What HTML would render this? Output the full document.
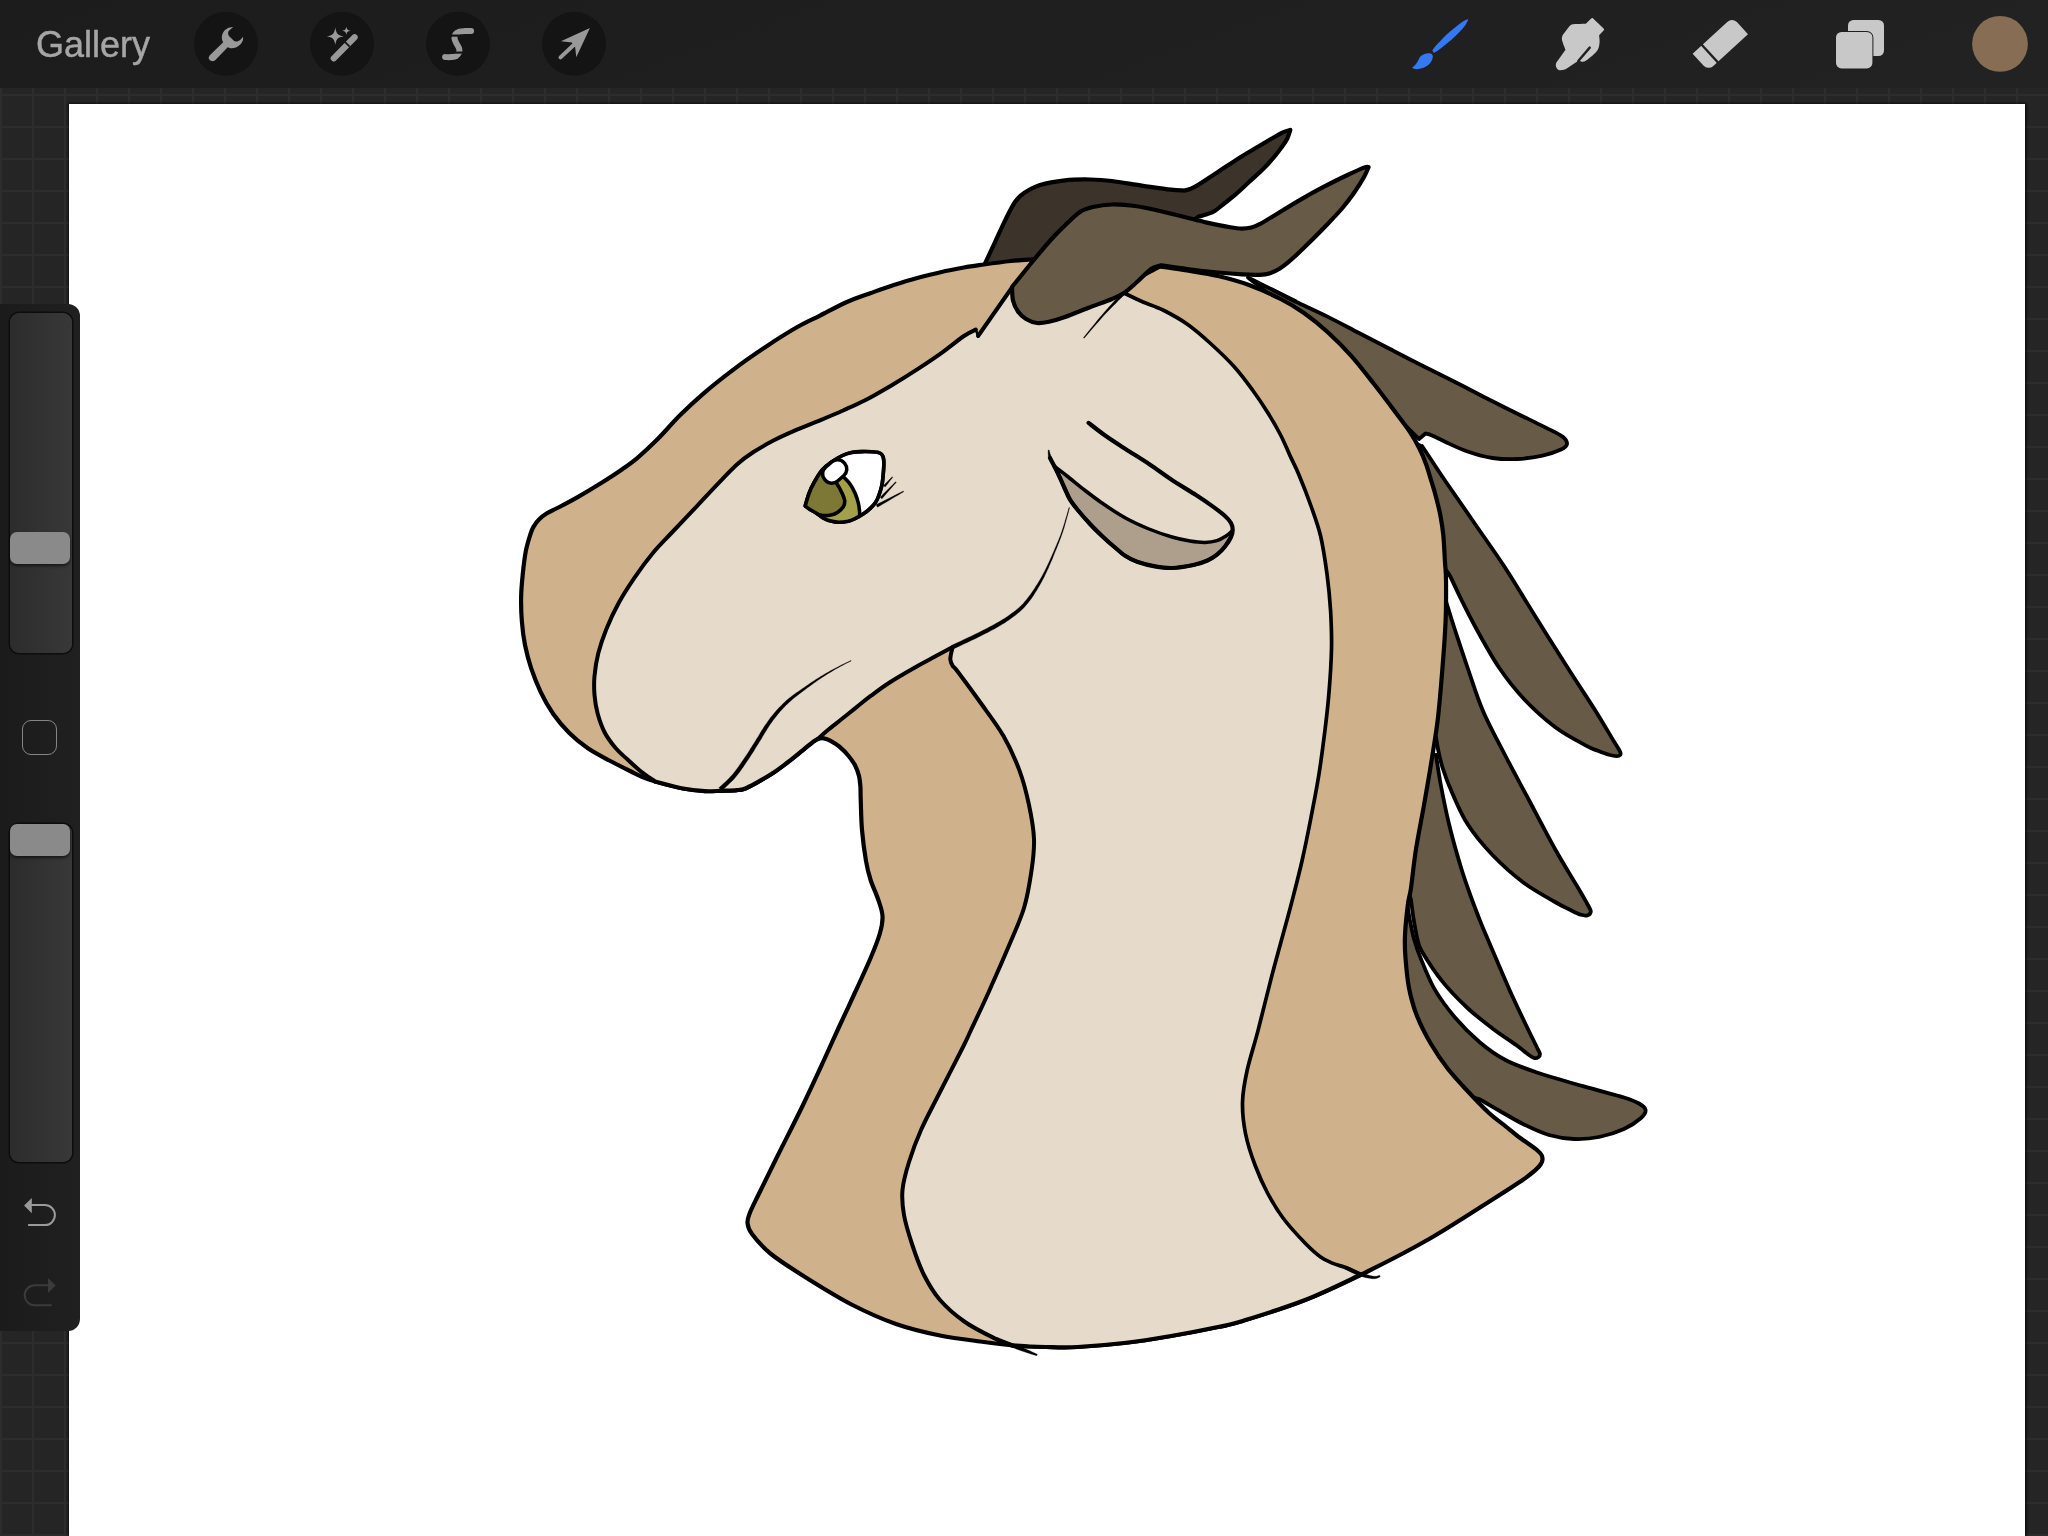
<!DOCTYPE html>
<html lang="en">
<head>
<meta charset="utf-8">
<title>Procreate canvas</title>
<style>
html,body{margin:0;padding:0;width:2048px;height:1536px;overflow:hidden;background:#252525;}
body{position:relative;font-family:"Liberation Sans",sans-serif;}
#bg{position:absolute;left:0;top:0;width:2048px;height:1536px;background-color:#252525;
 background-image:linear-gradient(to right,#2d2d2d 0,#2d2d2d 2px,transparent 2px),linear-gradient(to bottom,#2d2d2d 0,#2d2d2d 2px,transparent 2px);
 background-size:32px 32px,32px 32px;background-position:0px 0px,0px 30px;}
#canvas{position:absolute;left:69px;top:104px;width:1956px;height:1432px;background:#fff;box-shadow:0 0 3px 1.5px rgba(0,0,0,0.8);}
#topbar{position:absolute;left:0;top:0;width:2048px;height:88px;background:linear-gradient(160deg,#1c1c1c 0%,#1f1f1f 50%,#222222 100%);}
#gallery{position:absolute;left:36px;top:24.4px;font-size:36px;line-height:42px;color:#a6a6a6;letter-spacing:0px;-webkit-text-stroke:0.45px #a6a6a6;will-change:transform;}
#side{position:absolute;left:0;top:304px;width:80px;height:1027px;background:linear-gradient(to right,#1b1b1b,#202020);border-radius:0 12px 12px 0;}
.track{position:absolute;left:9.5px;width:62px;background:linear-gradient(to right,#2c2c2c,#383838);border-radius:9px;box-shadow:0 0 0 1.5px #0d0d0d;}
.thumb{position:absolute;left:10px;width:60px;height:32px;background:#8a8a8a;border-radius:7px;box-shadow:0 2px 3px rgba(0,0,0,0.55);}
#sq{position:absolute;left:22px;top:720px;width:33px;height:33px;border:1.6px solid #858585;border-radius:9px;}
#art{position:absolute;left:0;top:0;}
#ui{position:absolute;left:0;top:0;}
</style>
</head>
<body>
<div id="bg"></div>
<div id="canvas"></div>
<svg id="art" width="2048" height="1536" viewBox="0 0 2048 1536">
<path d="M1407.0 903.0C1407.5 905.7 1408.5 913.0 1409.7 919.0C1410.9 925.0 1412.2 932.5 1414.0 939.0C1415.8 945.5 1417.1 949.6 1420.6 958.0C1424.0 966.4 1429.0 979.5 1434.7 989.4C1440.4 999.3 1447.5 1008.6 1455.0 1017.5C1462.5 1026.3 1471.7 1035.5 1480.0 1042.5C1488.3 1049.5 1495.6 1054.8 1505.0 1059.7C1514.4 1064.7 1523.2 1067.8 1536.2 1072.2C1549.2 1076.6 1568.4 1082.0 1583.0 1086.2C1597.6 1090.5 1614.7 1094.6 1624.0 1097.5C1633.3 1100.4 1635.4 1101.4 1639.0 1103.5C1642.6 1105.6 1645.3 1107.6 1645.6 1110.0C1645.9 1112.4 1644.6 1114.8 1641.0 1118.0C1637.4 1121.2 1631.0 1125.8 1624.0 1129.0C1617.0 1132.2 1607.3 1135.3 1599.0 1137.0C1590.7 1138.7 1582.3 1139.3 1574.0 1139.0C1565.7 1138.7 1557.3 1137.4 1549.0 1135.0C1540.7 1132.6 1532.3 1128.6 1524.0 1124.5C1515.7 1120.4 1506.3 1114.7 1499.0 1110.5C1491.7 1106.3 1483.2 1101.3 1480.0 1099.5C1473.3 1096.2 1454.2 1096.6 1440.0 1080.0C1425.8 1063.4 1400.5 1029.5 1395.0 1000.0C1389.5 970.5 1405.0 919.2 1407.0 903.0Z" fill="#675a47" stroke="#000" stroke-width="3.8" stroke-linejoin="round" stroke-linecap="round" />
<path d="M1436.0 755.0C1436.8 760.2 1438.8 774.5 1441.0 786.0C1443.2 797.5 1445.7 810.4 1449.0 824.0C1452.3 837.6 1457.3 855.3 1461.0 867.5C1464.7 879.7 1467.8 888.1 1471.0 897.0C1474.2 905.9 1477.1 913.3 1480.0 920.6C1482.9 927.9 1485.6 934.1 1488.5 941.0C1491.4 947.9 1493.5 952.8 1497.5 962.0C1501.5 971.2 1507.3 985.2 1512.5 996.5C1517.7 1007.8 1524.2 1021.3 1528.4 1030.0C1532.6 1038.7 1535.6 1044.6 1537.5 1048.5C1539.4 1052.4 1539.7 1052.2 1539.9 1053.6C1540.1 1055.0 1539.5 1056.3 1538.6 1057.0C1537.6 1057.7 1536.1 1058.6 1534.2 1058.0C1532.3 1057.4 1529.8 1055.5 1527.0 1053.5C1524.2 1051.5 1523.2 1050.2 1517.5 1046.0C1511.8 1041.8 1500.8 1034.7 1492.5 1028.4C1484.2 1022.1 1475.8 1015.8 1467.5 1008.0C1459.2 1000.2 1450.0 991.0 1442.5 981.6C1435.0 972.2 1426.4 958.9 1422.2 951.9C1418.0 944.9 1418.9 944.9 1417.5 939.4C1416.1 933.9 1414.7 925.6 1413.6 919.0C1412.5 912.4 1411.4 903.2 1411.0 900.0C1409.2 891.7 1398.5 873.3 1400.0 850.0C1401.5 826.7 1414.0 775.8 1420.0 760.0C1426.0 744.2 1433.3 755.8 1436.0 755.0Z" fill="#675a47" stroke="#000" stroke-width="3.8" stroke-linejoin="round" stroke-linecap="round" />
<path d="M1445.6 600.0C1447.2 605.0 1451.3 618.8 1455.0 630.0C1458.7 641.2 1462.8 654.0 1467.5 667.5C1472.2 681.0 1476.8 696.4 1483.0 711.0C1489.2 725.6 1497.2 739.8 1505.0 755.0C1512.8 770.2 1521.7 786.3 1530.0 802.0C1538.3 817.7 1547.2 835.0 1555.0 849.0C1562.8 863.0 1571.2 876.2 1577.0 886.0C1582.8 895.8 1587.2 903.6 1589.5 908.0C1591.8 912.4 1590.8 911.3 1590.5 912.5C1590.2 913.7 1589.1 914.9 1587.5 915.3C1585.9 915.7 1583.9 915.7 1581.0 914.8C1578.1 913.9 1574.3 911.9 1570.0 909.8C1565.7 907.7 1562.7 906.5 1555.0 902.0C1547.3 897.5 1534.4 890.8 1524.0 883.0C1513.6 875.2 1501.9 864.8 1492.5 855.0C1483.1 845.2 1474.2 834.4 1467.5 824.0C1460.8 813.6 1456.2 801.9 1452.0 792.5C1447.8 783.1 1444.8 774.8 1442.5 767.5C1440.2 760.2 1439.1 754.1 1438.0 749.0C1436.9 743.9 1436.3 739.0 1436.0 737.0C1431.7 737.5 1412.7 762.8 1410.0 740.0C1407.3 717.2 1414.1 623.3 1420.0 600.0C1425.9 576.7 1441.3 600.0 1445.6 600.0Z" fill="#675a47" stroke="#000" stroke-width="3.8" stroke-linejoin="round" stroke-linecap="round" />
<path d="M1422.0 446.0C1423.5 448.2 1427.0 453.5 1431.0 459.5C1435.0 465.5 1438.8 471.5 1446.0 482.0C1453.2 492.5 1464.2 508.2 1474.0 522.5C1483.8 536.8 1494.7 551.7 1505.0 567.5C1515.3 583.3 1525.6 600.8 1536.0 617.5C1546.4 634.2 1557.6 651.9 1567.5 667.5C1577.4 683.1 1587.8 698.7 1595.6 711.0C1603.3 723.3 1609.9 734.8 1614.0 741.5C1618.1 748.2 1619.0 749.3 1620.0 751.5C1621.0 753.7 1620.9 754.0 1620.3 754.8C1619.7 755.6 1618.4 756.2 1616.5 756.2C1614.6 756.2 1612.1 755.7 1609.0 754.8C1605.9 753.9 1601.8 752.3 1598.0 750.8C1594.2 749.3 1593.2 749.6 1586.0 745.6C1578.8 741.6 1565.3 734.8 1555.0 727.0C1544.7 719.2 1533.3 708.9 1524.0 699.0C1514.7 689.1 1506.8 679.0 1499.0 667.5C1491.2 656.0 1483.3 641.4 1477.0 630.0C1470.7 618.6 1465.5 608.0 1461.0 599.0C1456.5 590.0 1452.7 581.0 1450.0 576.0C1447.3 571.0 1445.8 570.2 1445.0 569.0C1440.8 567.5 1427.5 579.8 1420.0 560.0C1412.5 540.2 1399.7 469.0 1400.0 450.0C1400.3 431.0 1418.3 446.7 1422.0 446.0Z" fill="#675a47" stroke="#000" stroke-width="3.8" stroke-linejoin="round" stroke-linecap="round" />
<path d="M1248.0 277.5C1252.2 279.6 1265.0 286.0 1273.0 290.0C1281.0 294.0 1286.9 297.3 1296.0 301.7C1305.1 306.1 1317.0 311.4 1327.5 316.6C1338.0 321.8 1348.6 327.6 1359.0 333.0C1369.4 338.4 1379.7 343.7 1390.0 349.0C1400.3 354.3 1409.3 359.1 1421.0 365.0C1432.7 370.9 1449.2 379.0 1460.0 384.5C1470.8 390.0 1475.3 392.6 1486.0 398.0C1496.7 403.4 1513.0 411.6 1524.0 417.0C1535.0 422.4 1545.5 427.3 1552.0 430.6C1558.5 433.9 1560.5 434.8 1563.0 437.0C1565.5 439.2 1567.3 441.9 1567.0 444.0C1566.7 446.1 1565.1 447.6 1561.0 449.5C1556.9 451.4 1549.8 454.0 1542.5 455.6C1535.2 457.2 1525.8 458.6 1517.5 459.0C1509.2 459.4 1500.8 459.2 1492.5 458.0C1484.2 456.8 1475.3 454.2 1467.5 451.5C1459.7 448.8 1451.5 444.7 1445.6 442.0C1439.7 439.3 1435.3 436.9 1432.0 435.5C1428.7 434.1 1426.6 433.8 1425.5 433.5L1419.0 439.0C1412.5 432.5 1399.8 419.8 1380.0 400.0C1360.2 380.2 1322.0 340.4 1300.0 320.0C1278.0 299.6 1256.7 284.6 1248.0 277.5Z" fill="#675a47" stroke="#000" stroke-width="3.8" stroke-linejoin="round" stroke-linecap="round" />
<path d="M985.3 263.0C986.9 259.6 991.3 250.1 994.7 242.8C998.1 235.5 1002.2 226.2 1005.6 219.4C1009.0 212.6 1011.9 206.4 1015.0 202.0C1018.1 197.6 1020.2 195.6 1024.4 192.8C1028.6 190.0 1033.2 187.1 1040.0 185.0C1046.8 182.9 1056.7 181.2 1065.0 180.3C1073.3 179.4 1082.2 179.4 1090.0 179.5C1097.8 179.6 1103.2 179.9 1112.0 181.0C1120.8 182.1 1133.2 184.4 1143.0 185.8C1152.8 187.2 1164.1 188.9 1171.0 189.7C1177.9 190.5 1182.3 190.4 1184.6 190.6C1186.4 189.9 1189.5 189.9 1195.2 186.7C1200.9 183.5 1210.8 176.6 1218.6 171.5C1226.4 166.4 1234.2 161.1 1242.0 156.2C1249.8 151.4 1258.7 146.2 1265.5 142.2C1272.3 138.2 1278.9 134.4 1283.0 132.4C1287.1 130.4 1289.1 130.4 1290.3 130.0C1289.8 131.4 1288.6 135.9 1287.2 138.7C1285.8 141.5 1284.0 144.0 1281.9 146.9C1279.8 149.8 1277.9 152.6 1274.8 156.2C1271.7 159.9 1267.4 164.8 1263.1 169.1C1258.8 173.4 1253.8 177.7 1249.1 182.0C1244.4 186.3 1239.3 191.2 1235.0 194.9C1230.7 198.6 1226.6 201.7 1223.3 204.3C1220.0 206.9 1217.8 209.0 1215.1 210.7C1212.4 212.4 1209.6 213.3 1206.9 214.3C1204.2 215.3 1200.1 216.2 1198.7 216.6C1190.6 222.2 1176.5 234.4 1150.0 250.0C1123.5 265.6 1065.0 303.3 1040.0 310.0C1015.0 316.7 1009.1 297.8 1000.0 290.0C990.9 282.2 987.8 267.5 985.3 263.0Z" fill="#3c332a" stroke="#000" stroke-width="4.2" stroke-linejoin="round" stroke-linecap="round" />
<path d="M1033.2 259.3C1029.5 259.6 1019.2 260.1 1011.0 261.0C1002.8 261.9 991.8 263.4 984.0 264.5C976.2 265.6 971.2 266.2 964.0 267.5C956.8 268.8 948.4 270.4 940.6 272.2C932.8 273.9 925.0 275.9 917.2 278.0C909.4 280.1 901.6 282.5 893.8 285.0C885.9 287.5 878.1 290.4 870.3 293.2C862.5 296.0 855.3 298.3 846.9 302.0C838.5 305.7 828.3 311.4 820.0 315.6C811.7 319.8 806.0 322.1 796.9 327.3C787.8 332.5 776.0 340.0 765.6 346.9C755.2 353.8 744.8 360.9 734.4 368.8C724.0 376.6 712.2 385.9 703.1 393.8C694.0 401.6 687.5 407.8 679.7 415.6C671.9 423.4 663.3 433.6 656.2 440.6C649.2 447.6 643.2 453.0 637.5 457.8C631.8 462.6 627.9 465.3 621.9 469.5C615.9 473.7 608.9 478.2 601.6 482.8C594.3 487.4 585.1 492.9 578.1 496.9C571.1 500.9 564.6 504.3 559.4 507.0C554.2 509.7 550.3 511.2 546.9 513.3C543.5 515.4 541.2 517.3 539.0 519.5C536.8 521.7 535.0 524.2 533.6 526.6C532.2 529.0 531.8 529.9 530.5 534.0C529.2 538.1 527.1 544.5 525.8 551.2C524.5 558.0 523.5 566.9 522.7 574.7C521.9 582.5 521.2 590.2 521.1 598.0C521.0 605.8 521.2 613.8 521.9 621.6C522.5 629.4 523.4 637.2 525.0 645.0C526.6 652.8 528.6 660.6 531.2 668.4C533.9 676.2 537.0 684.3 540.6 691.9C544.2 699.5 548.4 707.0 553.1 713.8C557.8 720.5 563.0 726.8 568.8 732.5C574.5 738.2 580.7 743.3 587.5 748.0C594.3 752.7 602.3 756.7 609.4 760.5C616.5 764.3 623.4 767.8 630.0 771.0C636.6 774.2 640.2 776.6 649.0 779.5C657.8 782.4 673.7 786.6 683.0 788.5C692.3 790.4 698.4 790.7 704.6 791.1C710.8 791.5 714.9 791.0 720.3 790.8C725.7 790.6 732.8 790.5 736.9 790.1C741.0 789.8 741.5 789.9 744.7 788.7C748.0 787.5 751.7 785.4 756.4 782.8C761.1 780.2 767.8 776.4 773.0 773.0C778.2 769.6 782.8 766.0 787.7 762.3C792.6 758.6 798.1 754.0 802.3 750.6C806.5 747.2 810.4 743.8 813.0 741.8C815.6 739.8 816.1 739.5 817.9 738.9C819.7 738.3 821.7 738.1 823.8 738.4C825.9 738.7 828.0 739.4 830.6 740.8C833.2 742.2 836.5 744.2 839.4 746.7C842.3 749.2 845.6 752.4 848.2 755.5C850.8 758.6 853.2 761.8 855.0 765.2C856.8 768.6 858.1 772.4 859.0 776.0C859.9 779.6 860.1 782.9 860.4 786.7C860.7 790.5 860.4 791.8 860.7 799.0C861.0 806.2 861.1 819.7 862.0 830.0C862.9 840.3 864.6 852.7 866.0 861.0C867.4 869.3 868.6 873.7 870.6 880.0C872.6 886.3 876.0 893.0 878.0 899.0C880.0 905.0 882.2 910.3 882.5 916.0C882.8 921.7 882.0 926.0 880.0 933.0C878.0 940.0 874.8 948.1 870.6 958.0C866.4 967.9 860.3 981.0 855.0 992.5C849.7 1004.0 844.2 1015.8 839.0 1027.0C833.8 1038.2 830.1 1046.8 824.0 1060.0C817.9 1073.2 810.2 1090.0 802.5 1106.0C794.8 1122.0 784.8 1141.3 777.5 1156.0C770.2 1170.7 763.3 1184.6 758.8 1194.0C754.2 1203.4 751.9 1207.7 750.0 1212.5C748.1 1217.3 747.2 1219.4 747.5 1223.0C747.8 1226.6 748.1 1228.8 752.0 1234.0C755.9 1239.2 761.5 1246.4 771.0 1254.0C780.5 1261.6 795.4 1271.0 809.0 1279.5C822.6 1288.0 838.0 1297.6 852.5 1305.0C867.0 1312.4 881.4 1318.9 896.0 1324.0C910.6 1329.1 925.3 1332.5 940.0 1335.5C954.7 1338.5 971.5 1340.3 984.0 1342.0C996.5 1343.7 1004.7 1344.8 1015.0 1345.6C1025.3 1346.4 1035.6 1346.8 1046.0 1347.0C1056.4 1347.2 1064.5 1347.7 1077.5 1347.0C1090.5 1346.3 1108.4 1344.8 1124.0 1343.0C1139.6 1341.2 1155.3 1338.7 1171.0 1336.0C1186.7 1333.3 1206.1 1329.5 1218.0 1327.0C1229.9 1324.5 1228.0 1325.5 1242.5 1321.0C1257.0 1316.5 1284.2 1308.2 1305.0 1300.0C1325.8 1291.8 1346.7 1281.8 1367.5 1271.5C1388.3 1261.2 1409.2 1250.5 1430.0 1238.5C1450.8 1226.5 1476.8 1209.4 1492.5 1199.5C1508.2 1189.6 1516.2 1184.5 1524.0 1179.0C1531.8 1173.5 1535.9 1169.9 1539.0 1166.5C1542.1 1163.1 1542.7 1161.3 1542.5 1158.8C1542.3 1156.2 1542.2 1154.8 1538.0 1151.0C1533.8 1147.2 1523.0 1140.2 1517.5 1136.0C1512.0 1131.8 1509.5 1129.4 1504.7 1125.6C1500.0 1121.8 1495.1 1118.7 1489.0 1113.0C1482.9 1107.3 1474.8 1098.8 1468.0 1091.5C1461.2 1084.2 1454.2 1076.9 1448.0 1069.0C1441.8 1061.1 1436.2 1052.8 1431.0 1044.0C1425.8 1035.2 1420.7 1025.3 1417.0 1016.0C1413.3 1006.7 1410.9 997.7 1409.0 988.0C1407.1 978.3 1406.2 966.8 1405.5 958.0C1404.8 949.2 1404.6 944.1 1405.0 935.0C1405.4 925.9 1407.0 911.2 1408.0 903.4C1409.0 895.6 1409.7 897.1 1411.0 888.0C1412.3 878.9 1413.8 862.8 1416.0 849.0C1418.2 835.2 1421.4 819.7 1424.0 805.0C1426.6 790.3 1429.2 775.6 1431.5 761.0C1433.8 746.4 1436.2 733.1 1438.0 717.5C1439.8 701.9 1441.2 683.6 1442.5 667.5C1443.8 651.4 1445.0 635.2 1445.6 620.6C1446.2 606.0 1446.1 589.7 1446.0 580.0C1445.9 570.3 1445.5 570.0 1445.0 562.5C1444.5 555.0 1444.1 542.9 1443.3 535.0C1442.5 527.1 1441.5 521.3 1440.3 515.0C1439.1 508.7 1437.5 502.8 1436.0 497.0C1434.5 491.2 1432.7 485.5 1431.0 480.0C1429.3 474.5 1427.9 469.2 1426.0 464.0C1424.1 458.8 1422.5 454.6 1419.7 449.0C1416.9 443.4 1413.5 437.3 1409.0 430.6C1404.5 423.9 1398.8 416.8 1393.0 409.0C1387.2 401.2 1381.0 392.9 1374.0 384.0C1367.0 375.1 1358.8 364.3 1351.0 355.6C1343.2 346.9 1335.3 339.1 1327.5 332.0C1319.7 324.9 1311.8 318.5 1304.0 313.0C1296.2 307.5 1289.8 303.7 1280.6 299.0C1271.4 294.3 1259.4 288.8 1249.0 285.0C1238.6 281.2 1228.3 278.4 1218.0 276.0C1207.7 273.6 1196.7 272.1 1187.0 270.5C1177.3 268.9 1164.5 267.2 1160.0 266.5C1150.0 270.4 1121.1 291.2 1100.0 290.0C1078.9 288.8 1044.3 264.4 1033.2 259.3Z" fill="#cfb28c" stroke="#000" stroke-width="4.2" stroke-linejoin="round" stroke-linecap="round" />
<path d="M1012.0 287.5L978.1 336.0L975.8 329.6C973.8 330.7 969.9 332.0 964.0 336.0C958.1 340.0 948.4 348.0 940.6 353.6C932.8 359.2 925.0 364.3 917.2 369.4C909.4 374.5 902.4 378.9 893.8 384.0C885.1 389.1 874.1 395.6 865.6 400.0C857.1 404.4 850.6 407.1 843.0 410.5C835.4 413.9 827.7 417.1 820.0 420.3C812.3 423.5 804.7 426.3 796.9 429.7C789.1 433.1 780.7 436.8 773.4 440.6C766.1 444.4 759.1 448.4 753.1 452.3C747.1 456.2 743.2 458.9 737.5 464.0C731.8 469.1 725.8 475.5 718.8 482.8C711.7 490.1 703.1 499.5 695.3 507.8C687.5 516.1 678.9 525.0 671.9 532.5C664.9 540.0 659.4 545.2 653.1 552.8C646.9 560.3 640.1 569.5 634.4 577.8C628.7 586.1 623.4 594.2 618.8 602.8C614.1 611.4 609.6 621.1 606.2 629.4C602.9 637.7 600.4 645.0 598.4 652.8C596.4 660.6 595.1 669.2 594.5 676.2C593.9 683.3 594.0 688.8 594.5 695.0C595.0 701.2 596.0 707.5 597.7 713.8C599.4 720.0 601.7 726.8 604.7 732.5C607.7 738.2 611.7 743.4 615.6 748.0C619.5 752.6 623.9 756.1 628.1 760.0C632.3 763.9 636.5 767.9 641.0 771.5C645.5 775.1 652.7 779.8 655.0 781.5C659.7 782.7 674.7 786.9 683.0 788.5C691.3 790.1 698.4 790.7 704.6 791.1C710.8 791.5 714.9 791.0 720.3 790.8C725.7 790.6 732.8 790.5 736.9 790.1C741.0 789.8 741.5 789.9 744.7 788.7C748.0 787.5 751.7 785.4 756.4 782.8C761.1 780.2 767.8 776.4 773.0 773.0C778.2 769.6 782.8 766.0 787.7 762.3C792.6 758.6 798.1 754.0 802.3 750.6C806.5 747.2 810.4 743.8 813.0 741.8C815.6 739.8 817.1 739.4 817.9 738.9C819.4 737.6 822.8 734.3 826.7 731.0C830.6 727.7 836.5 723.2 841.4 719.3C846.3 715.4 851.1 711.5 856.0 707.6C860.9 703.7 865.0 700.1 870.7 695.9C876.4 691.7 882.2 687.2 890.0 682.2C897.8 677.2 910.0 670.3 917.5 666.0C925.0 661.7 929.1 659.7 935.0 656.5C940.9 653.3 949.8 648.6 952.7 647.0C952.4 648.2 951.4 651.8 951.0 654.0C950.6 656.2 950.1 658.0 950.4 660.0C950.7 662.0 951.4 663.8 952.7 665.8C954.0 667.8 953.5 666.0 958.0 672.0C962.5 678.0 972.4 691.3 980.0 702.0C987.6 712.7 996.9 724.6 1003.5 736.0C1010.1 747.4 1015.2 759.1 1019.5 770.6C1023.8 782.1 1026.6 793.6 1029.0 805.0C1031.4 816.4 1033.6 828.1 1034.0 839.0C1034.4 849.9 1033.2 859.1 1031.5 870.6C1029.8 882.1 1027.8 895.5 1024.0 908.0C1020.2 920.5 1014.9 931.5 1009.0 945.6C1003.1 959.7 994.8 978.4 988.5 992.5C982.2 1006.6 975.2 1020.9 971.0 1030.0C966.8 1039.1 968.2 1036.7 963.0 1047.0C957.8 1057.3 947.0 1078.2 940.0 1092.0C933.0 1105.8 926.2 1118.3 921.0 1130.0C915.8 1141.7 912.1 1152.0 909.0 1162.0C905.9 1172.0 903.3 1181.2 902.5 1190.0C901.7 1198.8 902.4 1206.0 904.0 1215.0C905.6 1224.0 908.7 1234.0 912.0 1244.0C915.3 1254.0 919.3 1265.7 924.0 1275.0C928.7 1284.3 933.2 1292.2 940.0 1300.0C946.8 1307.8 955.7 1315.5 965.0 1322.0C974.3 1328.5 988.2 1335.1 996.0 1339.0C1003.8 1342.9 1009.3 1344.2 1012.0 1345.3C1015.0 1345.5 1024.3 1346.2 1030.0 1346.5C1035.7 1346.8 1038.1 1346.9 1046.0 1347.0C1053.9 1347.1 1064.5 1347.7 1077.5 1347.0C1090.5 1346.3 1108.4 1344.8 1124.0 1343.0C1139.6 1341.2 1155.3 1338.7 1171.0 1336.0C1186.7 1333.3 1206.1 1329.5 1218.0 1327.0C1229.9 1324.5 1228.0 1325.5 1242.5 1321.0C1257.0 1316.5 1285.2 1307.8 1305.0 1300.0C1324.8 1292.2 1351.7 1278.8 1361.0 1274.5C1358.4 1273.3 1350.3 1269.4 1345.6 1267.6C1340.9 1265.8 1337.2 1265.2 1333.0 1263.4C1328.8 1261.6 1325.3 1260.4 1320.6 1257.0C1315.9 1253.6 1311.3 1249.5 1305.0 1243.0C1298.7 1236.5 1289.2 1226.3 1283.0 1218.0C1276.8 1209.7 1272.2 1201.8 1267.5 1193.0C1262.8 1184.2 1258.7 1174.8 1255.0 1165.0C1251.3 1155.2 1247.7 1144.4 1245.6 1134.0C1243.5 1123.6 1242.3 1113.0 1242.5 1102.5C1242.7 1092.0 1244.4 1083.0 1247.0 1071.0C1249.6 1059.0 1254.1 1045.7 1258.0 1030.6C1261.9 1015.5 1266.7 995.7 1270.6 980.6C1274.5 965.5 1278.1 952.6 1281.5 940.0C1284.9 927.4 1287.6 918.2 1291.0 905.0C1294.4 891.8 1298.7 875.6 1302.0 861.0C1305.3 846.4 1308.2 832.0 1311.0 817.5C1313.8 803.0 1316.7 788.6 1319.0 774.0C1321.3 759.4 1323.3 743.6 1325.0 730.0C1326.7 716.4 1327.9 706.0 1329.0 692.5C1330.1 679.0 1331.2 662.6 1331.5 649.0C1331.8 635.4 1331.3 623.5 1330.6 611.0C1329.8 598.5 1328.7 586.5 1327.0 574.0C1325.3 561.5 1323.3 547.3 1320.6 536.0C1317.9 524.7 1314.6 516.2 1311.0 506.0C1307.4 495.8 1302.5 483.4 1299.0 475.0C1295.5 466.6 1293.1 462.3 1290.0 455.6C1286.9 448.9 1284.3 442.1 1280.6 435.0C1276.9 427.9 1272.7 420.5 1268.0 413.0C1263.3 405.5 1258.2 397.8 1252.5 390.0C1246.8 382.2 1241.1 374.3 1234.0 366.5C1226.9 358.7 1217.8 350.1 1210.0 343.0C1202.2 335.9 1194.8 329.5 1187.0 324.0C1179.2 318.5 1170.3 313.7 1163.0 310.0C1155.7 306.3 1149.5 304.8 1143.0 302.0C1136.5 299.2 1127.2 294.5 1124.0 293.0C1113.3 294.2 1078.7 301.0 1060.0 300.0C1041.3 299.0 1020.0 289.2 1012.0 287.0Z" fill="#e6dacb" stroke="none" stroke-width="4.2" stroke-linejoin="round" stroke-linecap="round" />
<path d="M1012.0 287.5L978.1 336.0" fill="none" stroke="#000" stroke-width="4.0" stroke-linejoin="round" stroke-linecap="round" />
<path d="M978.1 336.0L975.8 329.6" fill="none" stroke="#000" stroke-width="2.6" stroke-linejoin="round" stroke-linecap="round" />
<path d="M975.8 329.6C973.8 330.7 969.9 332.0 964.0 336.0C958.1 340.0 948.4 348.0 940.6 353.6C932.8 359.2 925.0 364.3 917.2 369.4C909.4 374.5 902.4 378.9 893.8 384.0C885.1 389.1 874.1 395.6 865.6 400.0C857.1 404.4 850.6 407.1 843.0 410.5C835.4 413.9 827.7 417.1 820.0 420.3C812.3 423.5 804.7 426.3 796.9 429.7C789.1 433.1 780.7 436.8 773.4 440.6C766.1 444.4 759.1 448.4 753.1 452.3C747.1 456.2 743.2 458.9 737.5 464.0C731.8 469.1 725.8 475.5 718.8 482.8C711.7 490.1 703.1 499.5 695.3 507.8C687.5 516.1 678.9 525.0 671.9 532.5C664.9 540.0 659.4 545.2 653.1 552.8C646.9 560.3 640.1 569.5 634.4 577.8C628.7 586.1 623.4 594.2 618.8 602.8C614.1 611.4 609.6 621.1 606.2 629.4C602.9 637.7 600.4 645.0 598.4 652.8C596.4 660.6 595.1 669.2 594.5 676.2C593.9 683.3 594.0 688.8 594.5 695.0C595.0 701.2 596.0 707.5 597.7 713.8C599.4 720.0 601.7 726.8 604.7 732.5C607.7 738.2 611.7 743.4 615.6 748.0C619.5 752.6 623.9 756.1 628.1 760.0C632.3 763.9 636.5 767.9 641.0 771.5C645.5 775.1 652.7 779.8 655.0 781.5" fill="none" stroke="#000" stroke-width="4.0" stroke-linejoin="round" stroke-linecap="round" />
<path d="M655.0 781.5C659.7 782.7 674.7 786.9 683.0 788.5C691.3 790.1 698.4 790.7 704.6 791.1C710.8 791.5 714.9 791.0 720.3 790.8C725.7 790.6 732.8 790.5 736.9 790.1C741.0 789.8 741.5 789.9 744.7 788.7C748.0 787.5 751.7 785.4 756.4 782.8C761.1 780.2 767.8 776.4 773.0 773.0C778.2 769.6 782.8 766.0 787.7 762.3C792.6 758.6 798.1 754.0 802.3 750.6C806.5 747.2 810.4 743.8 813.0 741.8C815.6 739.8 817.1 739.4 817.9 738.9" fill="none" stroke="#000" stroke-width="4.2" stroke-linejoin="round" stroke-linecap="round" />
<path d="M817.9 738.9C819.4 737.6 822.8 734.3 826.7 731.0C830.6 727.7 836.5 723.2 841.4 719.3C846.3 715.4 851.1 711.5 856.0 707.6C860.9 703.7 865.0 700.1 870.7 695.9C876.4 691.7 882.2 687.2 890.0 682.2C897.8 677.2 910.0 670.3 917.5 666.0C925.0 661.7 929.1 659.7 935.0 656.5C940.9 653.3 949.8 648.6 952.7 647.0" fill="none" stroke="#000" stroke-width="4.0" stroke-linejoin="round" stroke-linecap="round" />
<path d="M952.7 647.0C952.4 648.2 951.4 651.8 951.0 654.0C950.6 656.2 950.1 658.0 950.4 660.0C950.7 662.0 951.4 663.8 952.7 665.8C954.0 667.8 953.5 666.0 958.0 672.0C962.5 678.0 972.4 691.3 980.0 702.0C987.6 712.7 996.9 724.6 1003.5 736.0C1010.1 747.4 1015.2 759.1 1019.5 770.6C1023.8 782.1 1026.6 793.6 1029.0 805.0C1031.4 816.4 1033.6 828.1 1034.0 839.0C1034.4 849.9 1033.2 859.1 1031.5 870.6C1029.8 882.1 1027.8 895.5 1024.0 908.0C1020.2 920.5 1014.9 931.5 1009.0 945.6C1003.1 959.7 994.8 978.4 988.5 992.5C982.2 1006.6 975.2 1020.9 971.0 1030.0C966.8 1039.1 968.2 1036.7 963.0 1047.0C957.8 1057.3 947.0 1078.2 940.0 1092.0C933.0 1105.8 926.2 1118.3 921.0 1130.0C915.8 1141.7 912.1 1152.0 909.0 1162.0C905.9 1172.0 903.3 1181.2 902.5 1190.0C901.7 1198.8 902.4 1206.0 904.0 1215.0C905.6 1224.0 908.7 1234.0 912.0 1244.0C915.3 1254.0 919.3 1265.7 924.0 1275.0C928.7 1284.3 933.2 1292.2 940.0 1300.0C946.8 1307.8 955.7 1315.5 965.0 1322.0C974.3 1328.5 988.2 1335.1 996.0 1339.0C1003.8 1342.9 1009.3 1344.2 1012.0 1345.3" fill="none" stroke="#000" stroke-width="4.0" stroke-linejoin="round" stroke-linecap="round" />
<path d="M1012.0 1345.3C1015.0 1345.5 1024.3 1346.2 1030.0 1346.5C1035.7 1346.8 1038.1 1346.9 1046.0 1347.0C1053.9 1347.1 1064.5 1347.7 1077.5 1347.0C1090.5 1346.3 1108.4 1344.8 1124.0 1343.0C1139.6 1341.2 1155.3 1338.7 1171.0 1336.0C1186.7 1333.3 1206.1 1329.5 1218.0 1327.0C1229.9 1324.5 1228.0 1325.5 1242.5 1321.0C1257.0 1316.5 1285.2 1307.8 1305.0 1300.0C1324.8 1292.2 1351.7 1278.8 1361.0 1274.5" fill="none" stroke="#000" stroke-width="4.2" stroke-linejoin="round" stroke-linecap="round" />
<path d="M1361.0 1274.5C1358.4 1273.3 1350.3 1269.4 1345.6 1267.6C1340.9 1265.8 1337.2 1265.2 1333.0 1263.4C1328.8 1261.6 1325.3 1260.4 1320.6 1257.0C1315.9 1253.6 1311.3 1249.5 1305.0 1243.0C1298.7 1236.5 1289.2 1226.3 1283.0 1218.0C1276.8 1209.7 1272.2 1201.8 1267.5 1193.0C1262.8 1184.2 1258.7 1174.8 1255.0 1165.0C1251.3 1155.2 1247.7 1144.4 1245.6 1134.0C1243.5 1123.6 1242.3 1113.0 1242.5 1102.5C1242.7 1092.0 1244.4 1083.0 1247.0 1071.0C1249.6 1059.0 1254.1 1045.7 1258.0 1030.6C1261.9 1015.5 1266.7 995.7 1270.6 980.6C1274.5 965.5 1278.1 952.6 1281.5 940.0C1284.9 927.4 1287.6 918.2 1291.0 905.0C1294.4 891.8 1298.7 875.6 1302.0 861.0C1305.3 846.4 1308.2 832.0 1311.0 817.5C1313.8 803.0 1316.7 788.6 1319.0 774.0C1321.3 759.4 1323.3 743.6 1325.0 730.0C1326.7 716.4 1327.9 706.0 1329.0 692.5C1330.1 679.0 1331.2 662.6 1331.5 649.0C1331.8 635.4 1331.3 623.5 1330.6 611.0C1329.8 598.5 1328.7 586.5 1327.0 574.0C1325.3 561.5 1323.3 547.3 1320.6 536.0C1317.9 524.7 1314.6 516.2 1311.0 506.0C1307.4 495.8 1302.5 483.4 1299.0 475.0C1295.5 466.6 1293.1 462.3 1290.0 455.6C1286.9 448.9 1284.3 442.1 1280.6 435.0C1276.9 427.9 1272.7 420.5 1268.0 413.0C1263.3 405.5 1258.2 397.8 1252.5 390.0C1246.8 382.2 1241.1 374.3 1234.0 366.5C1226.9 358.7 1217.8 350.1 1210.0 343.0C1202.2 335.9 1194.8 329.5 1187.0 324.0C1179.2 318.5 1170.3 313.7 1163.0 310.0C1155.7 306.3 1149.5 304.8 1143.0 302.0C1136.5 299.2 1127.2 294.5 1124.0 293.0" fill="none" stroke="#000" stroke-width="3.7" stroke-linejoin="round" stroke-linecap="round" />
<path d="M1012.0 287.0C1015.6 282.5 1027.0 268.2 1033.8 260.0C1040.5 251.8 1046.8 244.2 1052.5 238.0C1058.2 231.8 1063.3 226.9 1068.0 222.5C1072.7 218.1 1076.4 214.1 1080.6 211.5C1084.8 208.9 1087.8 208.2 1093.0 207.0C1098.2 205.8 1105.0 204.7 1112.0 204.5C1119.0 204.3 1127.0 204.9 1135.0 206.0C1143.0 207.1 1151.9 209.2 1160.0 211.0C1168.1 212.8 1175.6 214.9 1183.4 216.8C1191.2 218.7 1199.1 220.8 1206.9 222.6C1214.7 224.3 1224.5 226.3 1230.3 227.3C1236.1 228.3 1238.5 228.6 1242.0 228.6C1245.5 228.6 1248.5 228.2 1251.4 227.5C1254.3 226.8 1255.3 226.5 1259.6 224.2C1263.9 221.9 1270.4 217.8 1277.2 213.7C1284.0 209.6 1292.8 204.1 1300.6 199.6C1308.4 195.1 1316.2 190.8 1324.0 186.7C1331.8 182.6 1340.8 178.2 1347.5 175.0C1354.2 171.8 1360.4 168.9 1363.9 167.6C1367.4 166.3 1367.8 167.1 1368.6 167.0C1367.8 168.7 1366.4 172.8 1363.9 177.3C1361.4 181.8 1357.1 188.5 1353.4 193.8C1349.7 199.0 1346.5 203.3 1341.6 209.0C1336.7 214.7 1329.8 221.6 1324.0 227.7C1318.2 233.8 1312.3 239.6 1306.5 245.3C1300.7 251.0 1293.4 257.8 1288.9 261.7C1284.4 265.6 1282.6 266.8 1279.5 268.8C1276.4 270.7 1273.5 272.2 1270.2 273.2C1266.9 274.2 1264.3 274.6 1259.6 274.8C1254.9 275.0 1248.9 274.8 1242.0 274.4C1235.1 274.0 1227.2 273.4 1218.0 272.5C1208.8 271.6 1196.5 270.2 1187.0 269.0C1177.5 267.8 1165.3 265.9 1161.0 265.3C1159.3 265.9 1155.0 266.2 1151.0 269.0C1147.0 271.8 1141.5 278.0 1137.0 282.0C1132.5 286.0 1128.2 290.2 1124.0 293.0C1119.8 295.8 1118.0 296.5 1112.0 299.0C1106.0 301.5 1095.8 305.0 1088.0 308.0C1080.2 311.0 1071.5 314.7 1065.0 317.0C1058.5 319.3 1053.7 320.7 1049.0 321.7C1044.3 322.7 1040.8 323.4 1037.0 323.0C1033.2 322.6 1029.2 320.9 1026.0 319.0C1022.8 317.1 1020.2 314.6 1018.0 311.5C1015.8 308.4 1014.0 304.7 1013.0 300.6C1012.0 296.5 1012.2 289.3 1012.0 287.0Z" fill="#675a47" stroke="#000" stroke-width="4.2" stroke-linejoin="round" stroke-linecap="round" />
<path d="M1054.0 466.0C1056.2 467.7 1061.9 472.0 1067.0 476.0C1072.1 480.0 1078.7 485.5 1084.5 490.0C1090.3 494.5 1095.2 498.3 1102.0 503.0C1108.8 507.7 1117.7 513.7 1125.5 518.0C1133.3 522.3 1141.2 525.8 1149.0 529.0C1156.8 532.2 1165.2 535.0 1172.0 537.0C1178.8 539.0 1184.5 540.1 1190.0 541.0C1195.5 541.9 1200.5 542.5 1205.0 542.4C1209.5 542.3 1213.5 541.7 1217.0 540.6C1220.5 539.5 1223.6 537.5 1226.0 536.0C1228.4 534.5 1230.6 532.2 1231.5 531.5C1231.4 532.4 1232.1 534.5 1231.0 537.0C1229.9 539.5 1227.3 543.5 1225.0 546.5C1222.7 549.5 1219.9 552.4 1217.0 554.7C1214.1 557.0 1211.4 558.8 1207.5 560.5C1203.6 562.2 1199.3 563.8 1193.4 565.0C1187.5 566.2 1178.4 567.8 1172.0 568.0C1165.6 568.2 1160.8 567.4 1155.0 566.4C1149.2 565.4 1141.9 563.4 1137.0 561.7C1132.1 560.0 1129.4 558.5 1125.5 556.0C1121.6 553.5 1117.7 549.8 1113.8 546.5C1109.8 543.2 1106.0 539.8 1102.0 536.0C1098.0 532.2 1093.9 528.2 1090.0 524.0C1086.1 519.8 1081.9 515.1 1078.6 511.0C1075.3 506.9 1072.3 503.4 1070.0 499.6C1067.7 495.8 1066.4 492.1 1064.5 488.0C1062.6 483.9 1060.5 478.7 1058.7 475.0C1057.0 471.3 1054.8 467.5 1054.0 466.0Z" fill="#ad9f8c" stroke="#000" stroke-width="3.5" stroke-linejoin="round" stroke-linecap="round" />
<path d="M1088.6 422.9C1091.2 424.9 1098.2 430.6 1104.4 435.0C1110.6 439.4 1118.1 444.2 1125.5 449.0C1132.9 453.8 1141.2 458.8 1149.0 464.0C1156.8 469.2 1164.2 474.8 1172.0 480.0C1179.8 485.2 1189.2 490.6 1196.0 495.0C1202.8 499.4 1208.2 503.1 1213.0 506.6C1217.8 510.1 1222.0 513.3 1225.0 516.0C1228.0 518.7 1229.7 520.7 1231.0 523.0C1232.3 525.3 1232.7 527.7 1232.7 530.0C1232.7 532.3 1232.3 534.2 1231.0 537.0C1229.7 539.8 1227.3 543.5 1225.0 546.5C1222.7 549.5 1219.9 552.4 1217.0 554.7C1214.1 557.0 1211.4 558.8 1207.5 560.5C1203.6 562.2 1199.3 563.8 1193.4 565.0C1187.5 566.2 1178.4 567.8 1172.0 568.0C1165.6 568.2 1160.8 567.4 1155.0 566.4C1149.2 565.4 1141.9 563.4 1137.0 561.7C1132.1 560.0 1129.4 558.5 1125.5 556.0C1121.6 553.5 1117.7 549.8 1113.8 546.5C1109.8 543.2 1106.0 539.8 1102.0 536.0C1098.0 532.2 1093.9 528.2 1090.0 524.0C1086.1 519.8 1081.9 515.1 1078.6 511.0C1075.3 506.9 1072.3 503.4 1070.0 499.6C1067.7 495.8 1066.4 492.1 1064.5 488.0C1062.6 483.9 1060.5 478.7 1058.7 475.0C1057.0 471.3 1055.5 468.4 1054.0 465.6C1052.5 462.8 1050.7 459.3 1050.0 458.0" fill="none" stroke="#000" stroke-width="4.2" stroke-linejoin="round" stroke-linecap="round" />
<path d="M805.2 506.0C805.8 503.9 807.5 497.5 809.0 493.5C810.5 489.5 812.2 485.9 814.4 482.0C816.6 478.1 819.4 473.3 822.2 470.0C825.1 466.7 828.3 464.3 831.5 462.0C834.7 459.7 838.2 457.6 841.5 456.0C844.8 454.4 848.1 453.3 851.5 452.6C854.9 451.9 858.4 451.7 861.8 451.6C865.2 451.5 869.2 451.6 872.0 451.8C874.8 452.0 876.9 452.2 878.5 452.6C880.1 453.1 881.0 453.5 881.8 454.5C882.6 455.5 883.2 456.6 883.5 458.5C883.8 460.4 883.9 462.9 883.8 465.8C883.7 468.7 883.4 472.7 883.1 476.0C882.8 479.3 882.5 482.4 881.8 485.6C881.1 488.8 880.0 492.2 879.0 495.0C878.0 497.8 877.0 500.3 875.5 502.5C874.0 504.7 872.3 506.5 870.3 508.4C868.3 510.3 866.0 512.1 863.5 513.8C861.0 515.5 858.0 517.1 855.4 518.4C852.8 519.6 850.7 520.6 848.0 521.3C845.3 521.9 842.0 522.3 839.2 522.3C836.4 522.3 833.7 521.9 831.0 521.1C828.3 520.4 825.4 519.1 823.0 517.8C820.6 516.5 818.6 514.6 816.4 513.2C814.2 511.8 811.5 510.4 809.6 509.2C807.7 508.0 805.9 506.5 805.2 506.0Z" fill="#ffffff" stroke="#000" stroke-width="3.6" stroke-linejoin="round" stroke-linecap="round" />
<clipPath id="eyeclip"><path d="M805.2 506.0C805.8 503.9 807.5 497.5 809.0 493.5C810.5 489.5 812.2 485.9 814.4 482.0C816.6 478.1 819.4 473.3 822.2 470.0C825.1 466.7 828.3 464.3 831.5 462.0C834.7 459.7 838.2 457.6 841.5 456.0C844.8 454.4 848.1 453.3 851.5 452.6C854.9 451.9 858.4 451.7 861.8 451.6C865.2 451.5 869.2 451.6 872.0 451.8C874.8 452.0 876.9 452.2 878.5 452.6C880.1 453.1 881.0 453.5 881.8 454.5C882.6 455.5 883.2 456.6 883.5 458.5C883.8 460.4 883.9 462.9 883.8 465.8C883.7 468.7 883.4 472.7 883.1 476.0C882.8 479.3 882.5 482.4 881.8 485.6C881.1 488.8 880.0 492.2 879.0 495.0C878.0 497.8 877.0 500.3 875.5 502.5C874.0 504.7 872.3 506.5 870.3 508.4C868.3 510.3 866.0 512.1 863.5 513.8C861.0 515.5 858.0 517.1 855.4 518.4C852.8 519.6 850.7 520.6 848.0 521.3C845.3 521.9 842.0 522.3 839.2 522.3C836.4 522.3 833.7 521.9 831.0 521.1C828.3 520.4 825.4 519.1 823.0 517.8C820.6 516.5 818.6 514.6 816.4 513.2C814.2 511.8 811.5 510.4 809.6 509.2C807.7 508.0 805.9 506.5 805.2 506.0Z"/></clipPath>
<g clip-path="url(#eyeclip)">
<path d="M838.0 470.0C839.0 471.2 842.0 475.1 844.0 477.4C846.0 479.7 848.2 481.4 850.0 484.0C851.8 486.6 853.6 489.8 855.0 493.0C856.4 496.2 857.6 500.0 858.4 503.4C859.2 506.8 859.5 509.5 859.7 513.6C859.9 517.7 859.5 525.6 859.5 528.0C849.6 528.0 809.9 537.7 800.0 528.0C790.1 518.3 793.7 479.7 800.0 470.0C806.3 460.3 831.7 470.0 838.0 470.0Z" fill="#a3a04a" stroke="#000" stroke-width="3.6" stroke-linejoin="round" stroke-linecap="round" />
<path d="M832.0 478.0C832.9 479.0 835.5 481.7 837.2 484.2C838.9 486.7 840.8 490.3 842.0 493.0C843.2 495.7 844.5 498.3 844.7 500.6C844.9 502.9 844.4 504.9 843.3 506.8C842.1 508.7 839.8 510.8 837.8 512.2C835.8 513.6 833.5 514.5 831.0 515.0C828.5 515.5 826.0 515.8 822.8 515.5C819.6 515.2 813.8 513.4 812.0 513.0C809.7 511.7 798.3 512.2 798.0 505.0C797.7 497.8 804.3 474.5 810.0 470.0C815.7 465.5 828.3 476.7 832.0 478.0Z" fill="#7d7836" stroke="#000" stroke-width="3.6" stroke-linejoin="round" stroke-linecap="round" />
</g>
<path d="M805.2 506.0C805.8 503.9 807.5 497.5 809.0 493.5C810.5 489.5 812.2 485.9 814.4 482.0C816.6 478.1 819.4 473.3 822.2 470.0C825.1 466.7 828.3 464.3 831.5 462.0C834.7 459.7 838.2 457.6 841.5 456.0C844.8 454.4 848.1 453.3 851.5 452.6C854.9 451.9 858.4 451.7 861.8 451.6C865.2 451.5 869.2 451.6 872.0 451.8C874.8 452.0 876.9 452.2 878.5 452.6C880.1 453.1 881.0 453.5 881.8 454.5C882.6 455.5 883.2 456.6 883.5 458.5C883.8 460.4 883.9 462.9 883.8 465.8C883.7 468.7 883.4 472.7 883.1 476.0C882.8 479.3 882.5 482.4 881.8 485.6C881.1 488.8 880.0 492.2 879.0 495.0C878.0 497.8 877.0 500.3 875.5 502.5C874.0 504.7 872.3 506.5 870.3 508.4C868.3 510.3 866.0 512.1 863.5 513.8C861.0 515.5 858.0 517.1 855.4 518.4C852.8 519.6 850.7 520.6 848.0 521.3C845.3 521.9 842.0 522.3 839.2 522.3C836.4 522.3 833.7 521.9 831.0 521.1C828.3 520.4 825.4 519.1 823.0 517.8C820.6 516.5 818.6 514.6 816.4 513.2C814.2 511.8 811.5 510.4 809.6 509.2C807.7 508.0 805.9 506.5 805.2 506.0Z" fill="none" stroke="#000" stroke-width="3.6" stroke-linejoin="round" stroke-linecap="round" />
<rect x="-12.8" y="-9.1" width="25.6" height="18.2" rx="8.8" ry="8.4" transform="translate(834.7 471.5) rotate(-41)" fill="#fff" stroke="#000" stroke-width="3.5"/>
<path d="M953.5 648.8L954.9 648.2L956.7 647.4L958.8 646.4L961.2 645.3L963.7 644.1L966.3 642.9L968.8 641.7L971.2 640.6L973.5 639.5L975.8 638.4L978.2 637.2L980.6 636.0L983.0 634.8L985.4 633.6L987.7 632.5L989.9 631.3L992.1 630.1L994.3 628.9L996.4 627.7L998.5 626.5L1000.6 625.3L1002.6 624.1L1004.6 622.9L1006.5 621.6L1008.5 620.3L1010.3 619.0L1012.2 617.6L1014.0 616.3L1015.8 614.9L1017.5 613.5L1019.1 612.2L1020.7 610.8L1022.1 609.5L1023.4 608.2L1024.6 606.9L1025.8 605.6L1026.9 604.3L1028.0 602.9L1029.1 601.5L1030.3 600.0L1031.4 598.4L1032.6 596.7L1033.8 594.9L1034.9 593.1L1036.1 591.3L1037.2 589.4L1038.3 587.5L1039.4 585.7L1040.5 583.8L1041.5 582.0L1042.5 580.1L1043.5 578.2L1044.5 576.3L1045.4 574.3L1046.4 572.2L1047.4 570.1L1048.4 567.9L1049.4 565.6L1050.4 563.2L1051.5 560.8L1052.5 558.4L1053.4 556.0L1054.4 553.6L1055.3 551.3L1056.3 549.0L1057.2 546.7L1058.1 544.5L1059.0 542.2L1059.8 540.0L1060.7 537.8L1061.4 535.7L1062.2 533.6L1062.9 531.5L1063.5 529.4L1064.2 527.4L1064.7 525.4L1065.3 523.4L1065.8 521.6L1066.3 519.8L1066.8 518.1L1067.2 516.5L1067.7 514.9L1068.1 513.4L1068.5 511.9L1068.8 510.6L1069.1 509.4L1069.4 508.5L1069.6 507.7L1069.0 507.5L1068.8 508.3L1068.5 509.3L1068.2 510.4L1067.8 511.7L1067.4 513.2L1067.0 514.7L1066.5 516.3L1066.0 517.9L1065.5 519.6L1065.0 521.3L1064.5 523.2L1063.9 525.1L1063.3 527.1L1062.6 529.1L1061.9 531.2L1061.2 533.2L1060.5 535.3L1059.6 537.4L1058.8 539.6L1057.9 541.8L1056.9 544.0L1056.0 546.2L1055.0 548.5L1054.1 550.7L1053.1 553.0L1052.0 555.4L1051.0 557.8L1049.9 560.2L1048.8 562.5L1047.7 564.9L1046.7 567.1L1045.6 569.3L1044.6 571.3L1043.5 573.3L1042.5 575.2L1041.5 577.1L1040.4 578.9L1039.4 580.7L1038.3 582.5L1037.2 584.3L1036.0 586.1L1034.9 587.9L1033.7 589.7L1032.5 591.5L1031.3 593.2L1030.1 594.9L1028.9 596.5L1027.7 598.0L1026.6 599.5L1025.5 600.8L1024.4 602.1L1023.3 603.4L1022.2 604.6L1021.0 605.7L1019.7 607.0L1018.3 608.2L1016.8 609.5L1015.3 610.8L1013.6 612.1L1011.8 613.3L1010.1 614.6L1008.2 615.9L1006.3 617.2L1004.5 618.4L1002.6 619.6L1000.6 620.8L998.6 622.0L996.6 623.1L994.5 624.3L992.4 625.4L990.2 626.6L988.1 627.7L985.8 628.9L983.5 630.1L981.2 631.3L978.8 632.4L976.5 633.6L974.1 634.8L971.7 635.9L969.4 637.0L967.1 638.1L964.6 639.3L962.0 640.5L959.5 641.7L957.1 642.8L955.0 643.7L953.2 644.6L951.9 645.2Z" fill="#000" stroke="#000" stroke-width="0.3" stroke-linejoin="round"/>
<path d="M721.7 790.7L722.8 789.8L724.2 788.5L725.8 786.9L727.7 785.2L729.7 783.3L731.7 781.4L733.7 779.4L735.5 777.3L737.1 775.3L738.8 773.2L740.4 771.0L742.0 768.7L743.6 766.4L745.2 764.1L746.7 761.8L748.3 759.5L749.8 757.2L751.3 754.8L752.9 752.4L754.4 750.0L755.8 747.6L757.3 745.3L758.7 743.0L760.1 740.8L761.4 738.7L762.6 736.6L763.8 734.6L765.0 732.6L766.2 730.7L767.3 728.8L768.5 727.0L769.6 725.2L770.8 723.5L772.0 721.9L773.1 720.3L774.3 718.7L775.5 717.2L776.7 715.7L777.9 714.2L779.2 712.7L780.5 711.1L781.8 709.7L783.2 708.2L784.6 706.7L786.0 705.3L787.4 703.9L789.0 702.4L790.6 701.0L792.3 699.5L794.1 698.0L796.0 696.5L798.0 695.0L799.9 693.5L801.9 692.0L803.9 690.5L805.9 689.0L807.8 687.6L809.7 686.2L811.7 684.7L813.6 683.3L815.5 682.0L817.5 680.6L819.4 679.3L821.3 678.0L823.3 676.7L825.2 675.5L827.1 674.2L829.1 673.0L831.0 671.9L832.9 670.7L834.8 669.6L836.7 668.5L838.7 667.4L840.7 666.3L842.9 665.2L844.9 664.1L846.9 663.1L848.6 662.3L850.1 661.5L851.2 660.9L851.0 660.5L849.9 661.0L848.4 661.7L846.6 662.6L844.6 663.5L842.5 664.5L840.4 665.6L838.3 666.7L836.3 667.7L834.4 668.7L832.4 669.8L830.4 670.8L828.5 671.9L826.5 673.1L824.5 674.2L822.5 675.4L820.5 676.6L818.5 677.9L816.5 679.1L814.5 680.4L812.5 681.7L810.5 683.1L808.5 684.4L806.5 685.8L804.5 687.2L802.5 688.5L800.5 689.9L798.4 691.4L796.3 692.8L794.3 694.3L792.3 695.7L790.4 697.2L788.6 698.6L786.9 700.1L785.3 701.5L783.7 703.0L782.2 704.4L780.8 705.9L779.4 707.3L778.0 708.8L776.6 710.3L775.2 711.9L773.9 713.4L772.7 714.9L771.4 716.5L770.2 718.1L769.0 719.7L767.8 721.4L766.6 723.2L765.3 725.0L764.1 726.8L762.9 728.7L761.7 730.6L760.5 732.6L759.3 734.6L758.1 736.7L756.7 738.8L755.4 741.0L754.0 743.2L752.5 745.6L751.0 747.9L749.5 750.3L748.0 752.7L746.5 755.0L744.9 757.3L743.4 759.6L741.8 761.8L740.3 764.1L738.7 766.4L737.1 768.6L735.5 770.7L733.9 772.7L732.3 774.7L730.6 776.5L728.8 778.5L726.8 780.4L724.9 782.2L723.0 783.9L721.4 785.4L719.9 786.7L718.9 787.7Z" fill="#000" stroke="#000" stroke-width="0.3" stroke-linejoin="round"/>
<path d="M1122.9 292.0L1121.4 293.6L1119.4 295.7L1117.0 298.3L1114.4 301.1L1111.5 304.2L1108.7 307.3L1105.9 310.4L1103.3 313.4L1100.7 316.4L1097.9 319.8L1095.0 323.4L1092.1 326.9L1089.4 330.3L1087.0 333.3L1085.0 335.8L1083.4 337.7L1084.1 338.3L1085.7 336.4L1087.8 333.9L1090.3 331.0L1093.1 327.7L1096.1 324.3L1099.1 320.9L1102.0 317.6L1104.7 314.6L1107.4 311.8L1110.3 308.8L1113.3 305.8L1116.2 302.9L1118.9 300.1L1121.4 297.7L1123.5 295.6L1125.1 294.0Z" fill="#000" stroke="#000" stroke-width="0.3" stroke-linejoin="round"/>
<path d="M1051.5 457.7L1051.3 457.3L1051.2 456.8L1050.9 456.1L1050.7 455.4L1050.5 454.7L1050.2 454.0L1050.0 453.4L1049.9 452.9L1049.7 452.4L1049.6 452.0L1049.5 451.5L1049.4 451.1L1049.4 450.8L1049.3 450.5L1049.2 450.2L1049.2 450.0L1048.2 450.0L1048.2 450.3L1048.2 450.5L1048.2 450.9L1048.1 451.2L1048.1 451.7L1048.1 452.1L1048.1 452.6L1048.1 453.1L1048.2 453.7L1048.2 454.4L1048.3 455.2L1048.3 455.9L1048.4 456.7L1048.5 457.3L1048.5 457.9L1048.5 458.3Z" fill="#000" stroke="#000" stroke-width="0.3" stroke-linejoin="round"/>
<path d="M885.1 487.0L885.8 486.2L886.7 485.0L887.8 483.7L889.0 482.1L890.1 480.6L891.2 479.2L892.2 478.1L892.8 477.3L892.2 476.7L891.5 477.5L890.4 478.5L889.2 479.8L887.8 481.2L886.5 482.5L885.2 483.8L884.2 484.8L883.5 485.6Z" fill="#000" stroke="#000" stroke-width="0.3" stroke-linejoin="round"/>
<path d="M881.9 498.8L883.1 497.4L884.8 495.5L886.9 493.1L889.1 490.5L891.3 488.0L893.4 485.6L895.1 483.7L896.3 482.3L895.7 481.7L894.4 483.0L892.5 484.9L890.3 487.1L887.9 489.5L885.5 491.8L883.3 494.0L881.4 495.9L880.1 497.2Z" fill="#000" stroke="#000" stroke-width="0.3" stroke-linejoin="round"/>
<path d="M877.5 507.2L879.7 505.9L882.8 504.1L886.5 501.9L890.6 499.5L894.6 497.1L898.4 494.9L901.5 493.1L903.7 491.8L903.3 491.0L901.0 492.2L897.8 493.8L893.9 495.8L889.7 497.9L885.5 500.0L881.6 502.0L878.4 503.6L876.1 504.8Z" fill="#000" stroke="#000" stroke-width="0.3" stroke-linejoin="round"/>
<path d="M995.3 1340.8L996.6 1341.3L998.3 1341.9L1000.3 1342.7L1002.6 1343.6L1004.9 1344.5L1007.2 1345.5L1009.4 1346.3L1011.3 1347.1L1013.0 1347.7L1014.6 1348.3L1016.1 1348.9L1017.5 1349.4L1019.0 1349.9L1020.4 1350.5L1021.9 1351.0L1023.4 1351.6L1025.1 1352.1L1027.0 1352.7L1028.9 1353.3L1030.8 1353.9L1032.6 1354.5L1034.3 1355.0L1035.7 1355.4L1036.7 1355.7L1037.3 1354.3L1036.3 1353.8L1035.0 1353.2L1033.4 1352.4L1031.7 1351.7L1029.9 1350.8L1028.0 1350.0L1026.2 1349.2L1024.6 1348.4L1023.1 1347.8L1021.7 1347.2L1020.2 1346.6L1018.8 1346.1L1017.4 1345.5L1015.9 1344.9L1014.4 1344.2L1012.7 1343.5L1010.8 1342.8L1008.6 1341.9L1006.3 1341.0L1003.9 1340.1L1001.7 1339.2L999.7 1338.4L998.0 1337.7L996.7 1337.2Z" fill="#000" stroke="#000" stroke-width="0.3" stroke-linejoin="round"/>
<path d="M1344.8 1269.2L1346.0 1269.8L1347.7 1270.6L1349.6 1271.5L1351.7 1272.5L1354.0 1273.5L1356.3 1274.5L1358.4 1275.4L1360.4 1276.2L1362.2 1276.7L1364.1 1277.2L1365.9 1277.7L1367.6 1278.0L1369.3 1278.3L1370.9 1278.5L1372.3 1278.7L1373.7 1278.7L1374.9 1278.7L1376.1 1278.5L1377.1 1278.2L1378.0 1277.9L1378.8 1277.5L1379.4 1277.2L1379.9 1276.9L1380.2 1276.7L1379.8 1275.3L1379.3 1275.4L1378.7 1275.6L1378.0 1275.8L1377.3 1276.0L1376.6 1276.2L1375.7 1276.3L1374.8 1276.3L1373.8 1276.3L1372.7 1276.1L1371.3 1275.8L1369.8 1275.4L1368.3 1275.0L1366.7 1274.6L1365.0 1274.0L1363.3 1273.4L1361.6 1272.8L1359.8 1272.1L1357.7 1271.2L1355.5 1270.3L1353.3 1269.2L1351.1 1268.2L1349.2 1267.3L1347.6 1266.5L1346.4 1266.0Z" fill="#000" stroke="#000" stroke-width="0.3" stroke-linejoin="round"/>
<path d="M1296.9 299.9L1295.1 299.1L1292.8 297.9L1290.0 296.6L1286.9 295.0L1283.6 293.4L1280.2 291.8L1276.8 290.2L1273.7 288.6L1270.5 287.1L1266.9 285.4L1263.3 283.7L1259.6 281.9L1256.1 280.3L1253.0 278.8L1250.4 277.5L1248.4 276.6L1247.6 278.4L1249.5 279.4L1252.1 280.7L1255.1 282.3L1258.5 284.1L1262.1 286.0L1265.7 287.9L1269.1 289.7L1272.3 291.4L1275.4 293.0L1278.7 294.7L1282.0 296.5L1285.2 298.2L1288.3 299.9L1291.0 301.3L1293.3 302.6L1295.1 303.5Z" fill="#000" stroke="#000" stroke-width="0.3" stroke-linejoin="round"/>
</svg>
<div id="topbar"></div>
<div id="gallery">Gallery</div>
<div id="side"></div>
<div class="track" style="top:313px;height:340px;"></div>
<div class="thumb" style="top:532px;"></div>
<div id="sq"></div>
<div class="track" style="top:824px;height:338px;"></div>
<div class="thumb" style="top:824px;"></div>
<svg id="ui" width="2048" height="1536" viewBox="0 0 2048 1536">
<circle cx="226" cy="43.8" r="32" fill="#141414"/>
<circle cx="342" cy="43.8" r="32" fill="#141414"/>
<circle cx="458" cy="43.8" r="32" fill="#141414"/>
<circle cx="574" cy="43.8" r="32" fill="#141414"/>
<path d="M233.10 27.20C232.37 27.28 230.13 27.13 228.70 27.70C227.27 28.27 225.58 29.43 224.50 30.60C223.42 31.77 222.63 33.32 222.20 34.70C221.77 36.08 221.73 37.63 221.90 38.90C222.07 40.17 222.98 41.73 223.20 42.30L209.60 55.40C209.45 55.87 208.55 57.33 208.70 58.20C208.85 59.07 209.77 60.12 210.50 60.60C211.23 61.08 212.28 61.22 213.10 61.10C213.92 60.98 215.02 60.10 215.40 59.90L227.70 47.20C228.30 47.38 229.92 48.25 231.30 48.30C232.68 48.35 234.52 48.12 236.00 47.50C237.48 46.88 239.07 45.77 240.20 44.60C241.33 43.43 242.32 41.80 242.80 40.50C243.28 39.20 243.05 37.42 243.10 36.80C242.62 37.32 241.30 39.12 240.20 39.90C239.10 40.68 237.55 41.37 236.50 41.50C235.45 41.63 234.33 40.83 233.90 40.70L229.20 36.30C229.03 35.95 228.33 34.98 228.20 34.20C228.07 33.42 228.05 32.38 228.40 31.60C228.75 30.82 229.52 30.23 230.30 29.50C231.08 28.77 232.63 27.58 233.10 27.20Z" fill="#999999"/>
<path d="M333.8 58.4L354.6 37.3" stroke="#999999" stroke-width="6.2" stroke-linecap="round" fill="none"/>
<path d="M344.6 41.6L349.6 46.6" stroke="#141414" stroke-width="1.7" fill="none"/>
<path d="M335.30 27.50C336.16 33.66 337.88 35.42 343.90 36.30C337.88 37.18 336.16 38.94 335.30 45.10C334.44 38.94 332.72 37.18 326.70 36.30C332.72 35.42 334.44 33.66 335.30 27.50Z" fill="#999999"/>
<path d="M346.40 26.50C346.82 29.44 347.66 30.28 350.60 30.70C347.66 31.12 346.82 31.96 346.40 34.90C345.98 31.96 345.14 31.12 342.20 30.70C345.14 30.28 345.98 29.44 346.40 26.50Z" fill="#999999"/>
<path d="M471.10 31.10C470.07 31.10 466.80 31.02 464.90 31.10C463.00 31.18 461.27 31.08 459.70 31.60C458.13 32.12 456.37 33.07 455.50 34.20C454.63 35.33 454.33 36.83 454.50 38.40C454.67 39.97 455.73 41.95 456.50 43.60C457.27 45.25 458.67 46.83 459.10 48.30C459.53 49.77 459.62 51.10 459.10 52.40C458.58 53.70 457.30 55.32 456.00 56.10C454.70 56.88 453.12 56.93 451.30 57.10C449.48 57.27 446.13 57.10 445.10 57.10" fill="none" stroke="#999999" stroke-width="6" stroke-linecap="round" stroke-linejoin="round"/>
<rect x="440" y="34.5" width="40" height="2.2" fill="#141414"/>
<rect x="440" y="51.5" width="40" height="2.2" fill="#141414"/>
<path d="M560.5 57.4L574.5 44.3" stroke="#999999" stroke-width="4" stroke-linecap="round" fill="none"/>
<path d="M589.9 28L560.9 41.3L571.8 42.6L575 46L576.3 57.3Z" fill="#999999"/>
<path d="M1468.20 19.10C1467.25 19.53 1464.49 20.48 1462.50 21.70C1460.51 22.92 1458.42 24.67 1456.25 26.40C1454.08 28.13 1451.76 30.10 1449.50 32.10C1447.24 34.10 1444.87 36.23 1442.70 38.40C1440.53 40.57 1438.23 43.10 1436.50 45.10C1434.77 47.10 1433.00 49.52 1432.30 50.40L1433.90 53.00C1434.85 52.38 1437.43 50.87 1439.60 49.30C1441.77 47.73 1444.47 45.60 1446.90 43.60C1449.33 41.60 1451.95 39.38 1454.20 37.30C1456.45 35.22 1458.58 33.08 1460.40 31.10C1462.22 29.12 1463.88 27.13 1465.10 25.40C1466.32 23.67 1467.18 21.75 1467.70 20.70C1468.22 19.65 1468.12 19.37 1468.20 19.10Z" fill="#3478f6"/>
<path d="M1431.80 54.00C1431.97 54.35 1432.72 55.23 1432.80 56.10C1432.88 56.97 1432.73 58.07 1432.30 59.20C1431.87 60.33 1431.25 61.68 1430.20 62.90C1429.15 64.12 1427.57 65.55 1426.00 66.50C1424.43 67.45 1422.62 68.17 1420.80 68.60C1418.98 69.03 1416.57 69.23 1415.10 69.10C1413.63 68.97 1412.52 68.02 1412.00 67.80C1412.43 67.42 1413.73 66.42 1414.60 65.50C1415.47 64.58 1416.51 63.35 1417.20 62.30C1417.89 61.25 1418.15 60.23 1418.75 59.20C1419.35 58.17 1419.84 56.97 1420.80 56.10C1421.76 55.23 1423.20 54.48 1424.50 54.00C1425.80 53.52 1427.38 53.20 1428.60 53.20C1429.82 53.20 1431.27 53.87 1431.80 54.00Z" fill="#3478f6"/>
<path d="M1585.80 23.70L1591.20 18.60C1591.38 18.50 1591.93 17.98 1592.30 18.00C1592.67 18.02 1593.22 18.58 1593.40 18.70L1603.60 28.60C1603.68 28.75 1604.10 29.18 1604.10 29.50C1604.10 29.82 1603.68 30.33 1603.60 30.50L1599.10 35.25C1599.18 36.29 1599.68 39.42 1599.60 41.50C1599.52 43.58 1599.25 45.93 1598.60 47.75C1597.95 49.57 1597.65 50.36 1595.70 52.40C1593.75 54.44 1588.89 58.48 1586.90 60.00C1584.91 61.52 1584.72 61.29 1583.75 61.55C1582.78 61.81 1581.88 61.77 1581.10 61.55C1580.32 61.33 1579.43 60.47 1579.10 60.25L1566.00 69.10C1565.48 69.25 1564.11 69.87 1562.90 70.00C1561.69 70.13 1559.83 70.32 1558.75 69.90C1557.67 69.48 1556.88 68.50 1556.40 67.50C1555.93 66.50 1555.68 65.02 1555.90 63.90C1556.12 62.78 1557.40 61.32 1557.70 60.80L1565.50 49.80C1564.98 48.42 1563.00 43.49 1562.40 41.50C1561.80 39.51 1561.82 38.98 1561.90 37.85C1561.98 36.72 1562.73 35.23 1562.90 34.70L1569.20 26.40C1569.72 26.05 1570.83 24.72 1572.30 24.30C1573.77 23.88 1575.75 24.00 1578.00 23.90C1580.25 23.80 1584.50 23.73 1585.80 23.70Z" fill="#c8c8c8"/>
<path d="M1578.3 61L1589.7 47.6" stroke="#202020" stroke-width="2.4" stroke-linecap="round" fill="none"/>
<g transform="translate(1720.3 43.9) rotate(-42.5)"><path d="M-27 -11.5H20A7 7 0 0 1 27 -4.5V11.5H-20A7 7 0 0 1 -27 4.5Z" fill="#c8c8c8"/><rect x="-15.4" y="-13" width="2.3" height="26" fill="#202020"/></g>
<rect x="1848" y="20" width="36" height="36" rx="5.5" fill="#c8c8c8"/>
<rect x="1835" y="31" width="38.4" height="38.4" rx="6.5" fill="#1f1f1f"/>
<rect x="1836" y="32" width="36.4" height="36.4" rx="5.5" fill="#c8c8c8"/>
<circle cx="2000" cy="43.9" r="27.9" fill="#866d53"/>
<path d="M31 1205.1H44.9A10 10 0 0 1 44.9 1225.1H28.1" fill="none" stroke="#9a9a9a" stroke-width="2"/>
<path d="M24.1 1205.6L31.8 1198V1213.2Z" fill="#9a9a9a"/>
<path d="M48.5 1285.3H34.7A10 10 0 0 0 34.7 1305.3H51.8" fill="none" stroke="#3b3b3b" stroke-width="2"/>
<path d="M55.7 1285.5L48 1278V1293.1Z" fill="#3b3b3b"/>
</svg>
</body>
</html>
